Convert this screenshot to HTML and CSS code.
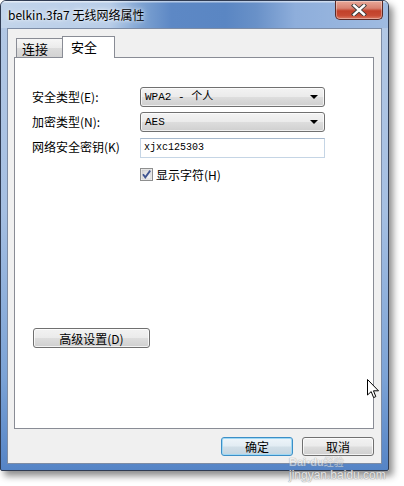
FILE: index.html
```html
<!DOCTYPE html>
<html lang="zh-CN">
<head>
<meta charset="utf-8">
<title>belkin.3fa7 无线网络属性</title>
<link rel="stylesheet" href="styles.css">
</head>
<body>
<div class="window">
  <div class="titlebar">
    <span class="title">belkin.3fa7 无线网络属性</span>
    <div class="close">
      <svg width="16" height="12" viewBox="0 0 16 12"><path d="M3 1.5 L13 10.5 M13 1.5 L3 10.5" stroke="#3a3a3a" stroke-width="4.2" stroke-linecap="square"/><path d="M3 1.5 L13 10.5 M13 1.5 L3 10.5" stroke="#ffffff" stroke-width="2.4" stroke-linecap="square"/></svg>
    </div>
  </div>
  <div class="client">
    <div class="tabs">
      <div class="tab">连接</div>
      <div class="tab active">安全</div>
    </div>
    <div class="panel">
      <div class="form">
        <label class="lbl">安全类型(E):</label>
        <div class="combo"><span>WPA2 - 个人</span><i class="arrow"></i></div>
        <label class="lbl">加密类型(N):</label>
        <div class="combo"><span>AES</span><i class="arrow"></i></div>
        <label class="lbl">网络安全密钥(K)</label>
        <div class="textbox">xjxc125303</div>
      </div>
      <div class="check-row">
        <svg class="checkbox" width="13" height="13" viewBox="0 0 13 13">
          <defs><linearGradient id="cb" x1="0" y1="0" x2="1" y2="1"><stop offset="0" stop-color="#d4d4d4"/><stop offset="1" stop-color="#fbfbfb"/></linearGradient></defs>
          <rect x="0.5" y="0.5" width="12" height="12" fill="#f4f4f4" stroke="#8e8f8f"/>
          <rect x="2" y="2" width="9" height="9" fill="url(#cb)" stroke="#c2c2c2" stroke-width="0.6"/>
          <path d="M3 6.2 L5.3 9.4 L10.2 2.6" fill="none" stroke="#3f5591" stroke-width="1.8"/>
        </svg>
        <span>显示字符(H)</span>
      </div>
      <button class="btn advanced">高级设置(D)</button>
    </div>
    <div class="actions">
      <button class="btn default">确定</button>
      <button class="btn">取消</button>
    </div>
  </div>
  <svg class="cursor" width="13" height="20" viewBox="0 0 13 20"><path d="M0.5 0.5 L0.5 16 L4.2 12.6 L6.6 18.6 L8.8 17.6 L6.5 11.8 L11.5 11.8 Z" fill="#fff" stroke="#000" stroke-width="1"/></svg>
  <div class="watermark">
    <div class="wm-logo">Bai<span class="paw">●</span>du<span class="wm-cn">经验</span></div>
    <div class="wm-url">jingyan.baidu.com</div>
  </div>
</div>
</body>
</html>
```

FILE: styles.css
```css
html, body {
  margin: 0;
  padding: 0;
  background: #ffffff;
}
body {
  width: 404px;
  height: 486px;
  overflow: hidden;
  font-family: "Noto Sans CJK SC", "Liberation Sans", sans-serif;
  font-size: 12px;
  color: #000;
}
.window {
  position: relative;
  box-sizing: border-box;
  width: 389px;
  height: 471px;
  border: 1px solid #2f3b52;
  border-radius: 6px 6px 2px 2px;
  background: linear-gradient(180deg, #b4c9e5 0%, #a5bfe2 45%, #7ca3d6 80%, #5584c6 100%);
  box-shadow: 4px 5px 7px rgba(0, 0, 0, 0.45);
  display: flex;
  flex-direction: column;
}
.titlebar {
  height: 27px;
  display: flex;
  align-items: flex-start;
  border-radius: 5px 5px 0 0;
  background:
    linear-gradient(180deg, rgba(255,255,255,0.55) 0, rgba(255,255,255,0.55) 1px, rgba(255,255,255,0) 2px),
    linear-gradient(90deg, #c2d4ea 0%, #b8cde8 28%, #7ea3d2 36%, #5d88c5 44%, #5a86c3 58%, #6991c8 66%, #8eaedb 76%, #9fbbe1 100%);
}
.title {
  margin: 6px 0 0 7px;
  font-size: 12px;
  line-height: 16px;
  color: #000;
  text-shadow: 0 0 6px rgba(255,255,255,0.9), 0 0 3px rgba(255,255,255,0.8);
}
.close {
  margin-left: auto;
  margin-right: 5px;
  box-sizing: border-box;
  width: 48px;
  height: 19px;
  border: 1px solid #5b2a26;
  border-top: none;
  border-radius: 0 0 5px 5px;
  background: linear-gradient(180deg, #e8a899 0%, #d88271 40%, #c2412a 55%, #c74a33 80%, #dc7a63 100%);
  box-shadow: inset 0 0 0 1px rgba(255,255,255,0.35);
  display: flex;
  align-items: center;
  justify-content: center;
}
.client {
  flex: 1;
  margin: 0 6px 6px 6px;
  border: 1px solid #7d8ca5;
  background: #f0f0f0;
  padding: 7px 7px 0 6px;
  display: flex;
  flex-direction: column;
}
.tabs {
  display: flex;
  align-items: flex-end;
  height: 21px;
  padding-left: 2px;
}
.tab {
  box-sizing: border-box;
  width: 47px;
  height: 19px;
  border: 1px solid #898c95;
  border-bottom: none;
  background: linear-gradient(180deg, #f6f6f6 0%, #ebebeb 50%, #dcdcdc 51%, #d2d2d2 100%);
  font-size: 13px;
  line-height: 20px;
  padding-left: 5px;
}
.tab.active {
  position: relative;
  z-index: 1;
  width: 53px;
  height: 22px;
  margin-left: -1px;
  margin-bottom: -1px;
  background: #ffffff;
  line-height: 19px;
  padding-left: 8px;
}
.panel {
  box-sizing: border-box;
  width: 360px;
  height: 372px;
  border: 1px solid #898c95;
  background: #ffffff;
  padding: 29px 0 0 17px;
  display: flex;
  flex-direction: column;
}
.form {
  display: grid;
  grid-template-columns: 108px 185px;
  grid-auto-rows: 20px;
  row-gap: 5px;
  align-items: center;
}
.lbl {
  line-height: 20px;
  white-space: nowrap;
}
.combo {
  box-sizing: border-box;
  height: 20px;
  border: 1px solid #707070;
  border-radius: 3px;
  background: linear-gradient(180deg, #f3f3f3 0%, #ebebeb 48%, #dddddd 52%, #cfcfcf 100%);
  box-shadow: inset 0 0 0 1px rgba(255,255,255,0.7);
  display: flex;
  align-items: center;
  padding: 0 6px 0 4px;
  font-family: "Liberation Mono", "Noto Sans CJK SC", monospace;
  font-size: 11px;
}
.combo span {
  flex: 1;
  line-height: 18px;
}
.arrow {
  width: 0;
  height: 0;
  border-left: 4px solid transparent;
  border-right: 4px solid transparent;
  border-top: 4px solid #000;
}
.textbox {
  box-sizing: border-box;
  height: 20px;
  margin-top: 2px;
  border: 1px solid #c5d5e5;
  border-top-color: #a6b8cc;
  background: #fff;
  padding-left: 3px;
  font-family: "Liberation Mono", monospace;
  font-size: 10px;
  line-height: 18px;
}
.check-row {
  display: flex;
  align-items: center;
  margin: 11px 0 0 108px;
  height: 13px;
  gap: 3px;
}
.checkbox {
  display: block;
}
.check-row span {
  line-height: 14px;
}
.btn {
  box-sizing: border-box;
  height: 20px;
  border: 1px solid #707070;
  border-radius: 3px;
  background: linear-gradient(180deg, #f2f2f2 0%, #ebebeb 48%, #dddddd 52%, #cfcfcf 100%);
  box-shadow: inset 0 0 0 1px rgba(255,255,255,0.75);
  font-family: "Noto Sans CJK SC", sans-serif;
  font-size: 12px;
  color: #000;
  padding: 0;
  line-height: 17px;
}
.advanced {
  width: 117px;
  margin: 147px 0 0 1px;
}
.actions {
  display: flex;
  justify-content: flex-end;
  gap: 9px;
  margin-top: 8px;
}
.actions .btn {
  width: 72px;
  height: 19px;
}
.btn.default {
  border-color: #3c8fc7;
  box-shadow: inset 0 0 0 1px #9fd8f4;
  background: linear-gradient(180deg, #eef5fa 0%, #e2ecf3 48%, #d1dfe8 52%, #c4d4df 100%);
}
.cursor {
  position: absolute;
  left: 366px;
  top: 378px;
}
.watermark {
  position: absolute;
  left: 288px;
  top: 455px;
  color: rgba(255,255,255,0.85);
  text-shadow: 0 0 1px #8a8a8a, 0 0 1px #8a8a8a;
  font-family: "Liberation Sans", sans-serif;
  pointer-events: none;
}
.wm-logo {
  font-size: 11px;
  font-weight: bold;
  line-height: 11px;
  opacity: 0.6;
}
.paw {
  font-size: 7px;
  vertical-align: 2px;
}
.wm-cn {
  font-family: "Noto Sans CJK SC", sans-serif;
  font-size: 10px;
  font-weight: normal;
}
.wm-url {
  font-size: 12px;
  line-height: 14px;
  margin-top: 0;
  opacity: 0.9;
}
```
